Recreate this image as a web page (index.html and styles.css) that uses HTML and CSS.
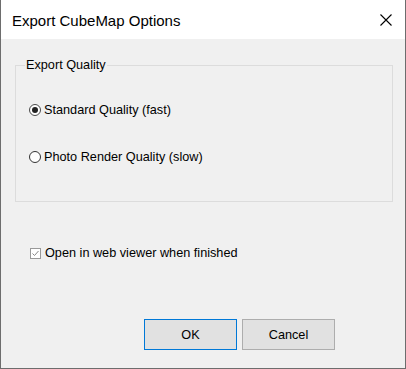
FILE: index.html
```html
<!DOCTYPE html>
<html>
<head>
<meta charset="utf-8">
<link rel="stylesheet" href="styles.css">
</head>
<body>
<div class="window">
  <div class="titlebar">
    <span class="title">Export CubeMap Options</span>
    <svg class="close" width="12" height="12" viewBox="0 0 12 12"><path d="M0.5 0.5 L11.5 11.5 M11.5 0.5 L0.5 11.5" stroke="#000" stroke-width="1.1" fill="none"/></svg>
  </div>
  <div class="content">
    <fieldset class="group">
      <legend class="legend">Export Quality</legend>
      <div class="option"><span class="radio checked"></span><span>Standard Quality (fast)</span></div>
      <div class="option"><span class="radio"></span><span>Photo Render Quality (slow)</span></div>
    </fieldset>
    <div class="check-row">
      <svg class="checkbox" width="11" height="11" viewBox="0 0 11 11"><rect x="0.5" y="0.5" width="10" height="10" fill="#fff" stroke="#999"/><path d="M2.5 5.5 L4.5 7.5 L8.5 3" stroke="#888" stroke-width="1" fill="none"/></svg>
      <span>Open in web viewer when finished</span>
    </div>
    <div class="buttons">
      <button class="btn default">OK</button>
      <button class="btn">Cancel</button>
    </div>
  </div>
</div>
</body>
</html>
```
FILE: styles.css
```css
html, body {
  margin: 0;
  padding: 0;
  background: #f0f0f0;
}
.window {
  width: 406px;
  height: 369px;
  box-sizing: border-box;
  border: 1px solid #6d6d6d;
  border-top: none;
  display: flex;
  flex-direction: column;
  font-family: "Liberation Sans", Arial, sans-serif;
  font-size: 12.7px;
  color: #000;
}
.titlebar {
  height: 39px;
  background: #fff;
  display: flex;
  align-items: center;
  justify-content: space-between;
  padding: 0 13px 0 11px;
  box-sizing: border-box;
}
.title {
  font-size: 15px;
  padding-top: 1px;
}
.close {
  display: block;
}
.content {
  flex: 1;
  background: #f0f0f0;
  display: flex;
  flex-direction: column;
}
.group {
  margin: 18px 12px 0 14px;
  padding: 0 0 34px 0;
  border: 1px solid #dcdcdc;
  display: flex;
  flex-direction: column;
  gap: 27px;
  min-inline-size: 0;
}
.legend {
  margin-left: 9px;
  padding: 0 1px;
  line-height: 16px;
  margin-bottom: 27px;
}
.option {
  display: flex;
  align-items: center;
  height: 20px;
  gap: 3px;
  margin-left: 13px;
}
.radio {
  width: 12px;
  height: 12px;
  box-sizing: border-box;
  border: 1px solid #333;
  border-radius: 50%;
  background: #fff;
  display: flex;
  align-items: center;
  justify-content: center;
}
.radio.checked {
  border-color: #4a4a4a;
}
.radio.checked::after {
  content: "";
  width: 6px;
  height: 6px;
  border-radius: 50%;
  background: #222;
}
.check-row {
  display: flex;
  align-items: center;
  height: 20px;
  margin: 41px 0 0 29px;
  gap: 4px;
}
.checkbox {
  display: block;
}
.buttons {
  display: flex;
  gap: 5px;
  margin: 56px 0 0 143px;
}
.btn {
  width: 93px;
  height: 31px;
  box-sizing: border-box;
  background: #e1e1e1;
  border: 1px solid #adadad;
  font-family: "Liberation Sans", Arial, sans-serif;
  font-size: 12.7px;
  color: #000;
  padding: 0;
  margin: 0;
}
.btn.default {
  border: 1px solid #0078d7;
}
```
